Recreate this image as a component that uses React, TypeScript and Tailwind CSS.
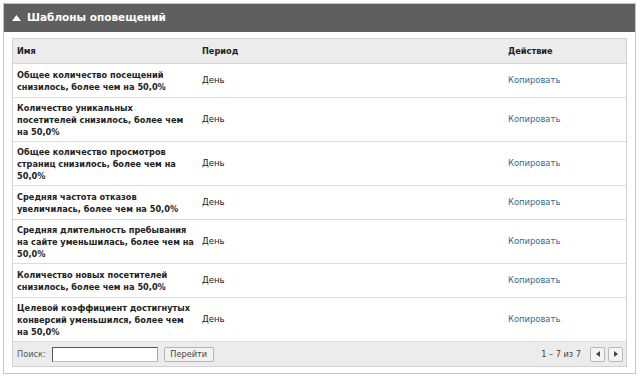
import React from "react";

const rows: { text: string[]; tall: boolean }[] = [
  { text: ["Общее количество посещений", "снизилось, более чем на 50,0%"], tall: false },
  { text: ["Количество уникальных", "посетителей снизилось, более чем", "на 50,0%"], tall: true },
  { text: ["Общее количество просмотров", "страниц снизилось, более чем на", "50,0%"], tall: true },
  { text: ["Средняя частота отказов", "увеличилась, более чем на 50,0%"], tall: false },
  { text: ["Средняя длительность пребывания", "на сайте уменьшилась, более чем на", "50,0%"], tall: true },
  { text: ["Количество новых посетителей", "снизилось, более чем на 50,0%"], tall: false },
  { text: ["Целевой коэффициент достигнутых", "конверсий уменьшился, более чем", "на 50,0%"], tall: true },
];

export default function App() {
  return (
    <div className="w-[640px] h-[377px] bg-white pt-[3px] pl-[3px]" style={{ fontFamily: "Tahoma, 'DejaVu Sans', sans-serif" }}>
      <div className="w-[633px] h-[371px] border border-[#c4c4c4] flex flex-col">
        <div className="h-[28px] bg-[#5f5f5f] flex items-center pl-[8px] gap-[6px]">
          <svg width="9" height="6" viewBox="0 0 9 6"><polygon points="0,6 4.5,0 9,6" fill="#ffffff" /></svg>
          <span className="text-white font-bold text-[10.5px]">Шаблоны оповещений</span>
        </div>
        <div className="flex-1 pt-[6px] px-[8px]">
          <div className="border border-[#d2d2d2] text-[8.2px] text-[#222]">
            <div className="h-[25px] bg-[#ececec] flex items-center font-bold border-b border-[#d8d8d8]">
              <div className="w-[185px] pl-[4px]">Имя</div>
              <div className="w-[307px] pl-[4px]">Период</div>
              <div className="flex-1 pl-[3px]">Действие</div>
            </div>
            {rows.map((r, i) => (
              <div key={i} className={`flex items-center border-b border-[#dcdcdc] ${r.tall ? "h-[44px]" : "h-[34px]"}`}>
                <div className="w-[185px] pl-[4px] font-bold leading-[12px]">
                  {r.text.map((t, j) => (
                    <div key={j} className="whitespace-nowrap">{t}</div>
                  ))}
                </div>
                <div className="w-[307px] pl-[4px] text-[8.6px]">День</div>
                <div className="flex-1 pl-[3px] text-[8.4px] text-[#2f6a94]">Копировать</div>
              </div>
            ))}
            <div className="h-[24px] bg-[#ececec] flex items-center pl-[4px] pr-[3px] text-[#555]">
              <span>Поиск:</span>
              <div className="ml-[6px] w-[106px] h-[15px] bg-white border border-[#555] border-r-[#aaa] border-b-[#bbb]"></div>
              <div className="ml-[6px] w-[50px] h-[15px] bg-[#f2f2f2] border border-[#b4b4b4] rounded-[2px] flex items-center justify-center text-[#444]">Перейти</div>
              <div className="flex-1"></div>
              <span className="text-[#444]">1 – 7 из 7</span>
              <div className="ml-[9px] w-[15px] h-[15px] bg-[#f4f4f4] border border-[#b8b8b8] rounded-[2px] flex items-center justify-center">
                <svg width="4" height="6" viewBox="0 0 4 6"><polygon points="4,0 0,3 4,6" fill="#444" /></svg>
              </div>
              <div className="ml-[3px] w-[15px] h-[15px] bg-[#f4f4f4] border border-[#b8b8b8] rounded-[2px] flex items-center justify-center">
                <svg width="4" height="6" viewBox="0 0 4 6"><polygon points="0,0 4,3 0,6" fill="#444" /></svg>
              </div>
            </div>
          </div>
        </div>
      </div>
    </div>
  );
}
